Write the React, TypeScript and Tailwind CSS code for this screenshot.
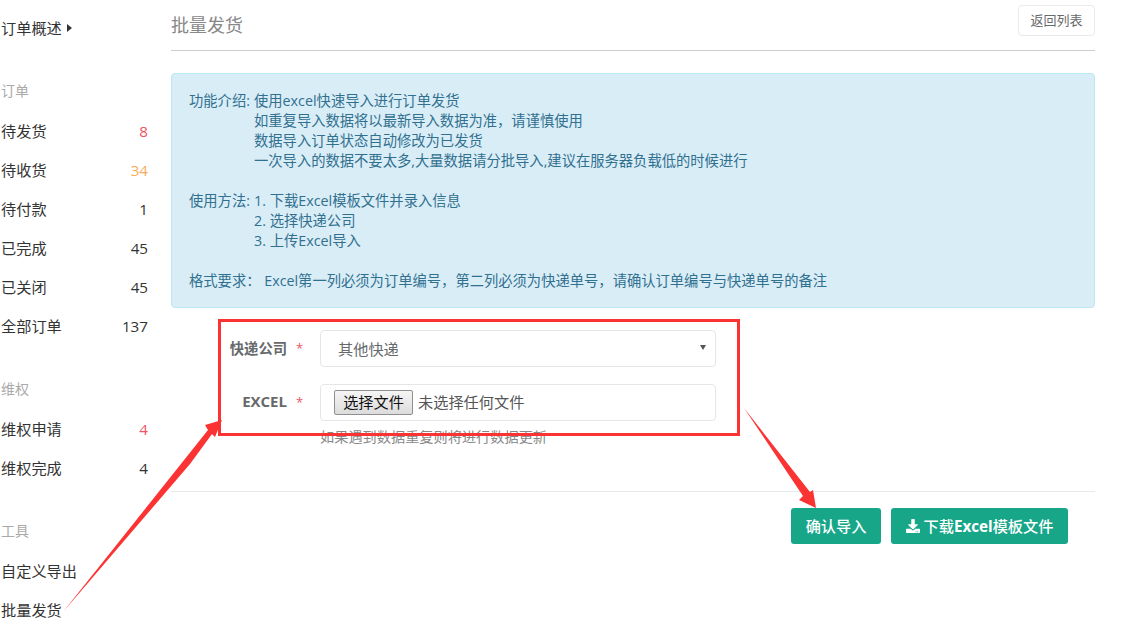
import React from "react";
import {FaDownload} from "react-icons/fa";

type NavItem = {
    title: string;
    count?: number;
    color?: string;
};

const orderItems: NavItem[] = [
    {title: "待发货", count: 8, color: "text-[#ed5565]"},
    {title: "待收货", count: 34, color: "text-[#f8ac59]"},
    {title: "待付款", count: 1},
    {title: "已完成", count: 45},
    {title: "已关闭", count: 45},
    {title: "全部订单", count: 137},
];

const rightsItems: NavItem[] = [
    {title: "维权申请", count: 4, color: "text-[#ed5565]"},
    {title: "维权完成", count: 4},
];

const toolItems: NavItem[] = [
    {title: "自定义导出"},
    {title: "批量发货"},
];

const NavGroup: React.FC<{title: string; items: NavItem[]; className: string}> = ({title, items, className}) => (
    <div className={className}>
        <div className="h-[41px] text-[14px] leading-[40px] text-[#aaaaaa]">{title}</div>
        {items.map((item) => (
            <div key={item.title} className="flex h-[39px] items-center justify-between text-[#333333]">
                <span>{item.title}</span>
                {item.count !== undefined && <span className={item.color}>{item.count}</span>}
            </div>
        ))}
    </div>
);

const Sidebar = () => (
    <div className="ml-px mr-px w-[147px] flex-shrink-0 text-[15.2px]">
        <div className="flex h-[56px] items-center gap-x-[5px] text-[#333333]">
            <span>订单概述</span>
            <span className="border-y-[4px] border-l-[5px] border-y-transparent border-l-[#333333]" />
        </div>
        <NavGroup title="订单" items={orderItems} className="mt-[15px]" />
        <NavGroup title="维权" items={rightsItems} className="mt-[23px]" />
        <NavGroup title="工具" items={toolItems} className="mt-[23px]" />
    </div>
);

const Notice = () => (
    <div className="mt-[22px] h-[235px] rounded border border-[#bce8f1] bg-[#d9edf7] px-[17px] py-[17px] text-[14.3px] leading-[20px] text-[#31708f]">
        <div className="flex">
            <span className="w-[65px] flex-shrink-0">功能介绍:</span>
            <div>
                <div>使用excel快速导入进行订单发货</div>
                <div>如重复导入数据将以最新导入数据为准，请谨慎使用</div>
                <div>数据导入订单状态自动修改为已发货</div>
                <div>一次导入的数据不要太多,大量数据请分批导入,建议在服务器负载低的时候进行</div>
            </div>
        </div>
        <div className="mt-[20px] flex">
            <span className="w-[65px] flex-shrink-0">使用方法:</span>
            <div>
                <div>1. 下载Excel模板文件并录入信息</div>
                <div>2. 选择快递公司</div>
                <div>3. 上传Excel导入</div>
            </div>
        </div>
        <div className="mt-[20px]">格式要求： Excel第一列必须为订单编号，第二列必须为快递单号，请确认订单编号与快递单号的备注</div>
    </div>
);

const ImportForm = () => (
    <div className="mt-[22px] text-[#676a6c]">
        <div className="flex h-[37px] items-center">
            <label className="w-[116px] text-right text-[14.3px] font-bold">快递公司</label>
            <span className="ml-[9px] w-[24px] text-[13px] text-[#ed5565]">*</span>
            <div className="relative">
                <select className="block h-[37px] w-[396px] appearance-none rounded-sm border border-[#e5e6e7] bg-white pl-[17px] pt-[2px] text-[15.2px] text-[#676a6c]">
                    <option>其他快递</option>
                </select>
                <span className="absolute right-[10px] top-[15px] border-x-[3px] border-t-[5px] border-x-transparent border-t-[#555555]" />
            </div>
        </div>
        <div className="mt-[17px] flex h-[37px] items-center">
            <label className="w-[116px] pb-[2px] text-right text-[15px] font-bold">EXCEL</label>
            <span className="ml-[9px] w-[24px] text-[13px] text-[#ed5565]">*</span>
            <div className="flex h-[37px] w-[396px] items-center rounded-sm border border-[#e5e6e7] bg-white pl-[13px] text-[15.2px]">
                <span className="flex h-[25px] w-[79px] items-center justify-center rounded-[2px] border border-[#8f8f8f] bg-gradient-to-b from-[#f5f5f5] to-[#dcdcdc] text-[#111111]">选择文件</span>
                <span className="ml-[5px] text-[#555555]">未选择任何文件</span>
            </div>
        </div>
        <div className="ml-[149px] mt-[6px] text-[14.2px] leading-[20px] text-[#888888]">如果遇到数据重复则将进行数据更新</div>
    </div>
);

const Annotations = () => (
    <>
        <div className="absolute left-[218px] top-[319px] h-[117px] w-[522px] border-[3px] border-[#fb3333]" />
        <svg className="absolute left-0 top-0 pointer-events-none" width="1136" height="622" viewBox="0 0 1136 622">
            <polygon points="63,612 208,430 205,425 222,420 215,437 212,434 190,464" fill="#fb3333" />
            <polygon points="744,408 810,492 813,490 816,508 799,500 803,496" fill="#fb3333" />
        </svg>
    </>
);

export default function App() {
    return (
        <div className="relative h-[622px] w-[1136px] overflow-hidden bg-white text-[14px] [font-family:'Open_Sans','Noto_Sans_CJK_SC',sans-serif]">
            <div className="flex">
                <Sidebar />
                <div className="ml-[22px] w-[924px]">
                    <div className="flex h-[51px] items-start justify-between border-b border-[#cccccc]">
                        <h1 className="mt-[11px] text-[18px] leading-[28px] text-[#888888]">批量发货</h1>
                        <button className="mt-[5px] h-[31px] w-[77px] rounded border border-[#e7eaec] bg-white pt-px text-[13px] text-[#676a6c]">返回列表</button>
                    </div>
                    <Notice />
                    <ImportForm />
                    <div className="mt-[44px] border-t border-[#e7eaec]" />
                    <div className="mt-[16px] flex justify-end gap-x-[10px] pr-[27px] text-[15.2px]">
                        <button className="h-[36px] w-[90px] rounded-[3px] bg-[#18a689] font-medium text-white">确认导入</button>
                        <button className="flex h-[36px] w-[177px] items-center justify-center gap-x-[4px] rounded-[3px] bg-[#18a689] font-medium text-white">
                            <FaDownload className="h-[14px] w-[14px]" />
                            <span>下载<span className="font-bold">Excel</span>模板文件</span>
                        </button>
                    </div>
                </div>
            </div>
            <Annotations />
        </div>
    );
}
